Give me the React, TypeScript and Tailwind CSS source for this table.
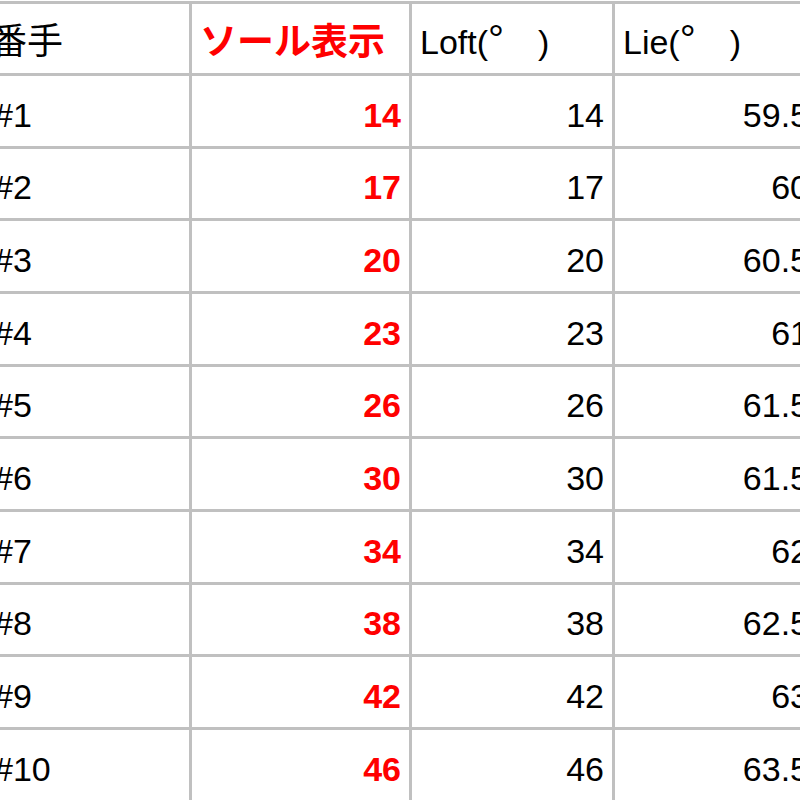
const rows = [
  { no: '#1', sole: '14', loft: '14', lie: '59.5' },
  { no: '#2', sole: '17', loft: '17', lie: '60' },
  { no: '#3', sole: '20', loft: '20', lie: '60.5' },
  { no: '#4', sole: '23', loft: '23', lie: '61' },
  { no: '#5', sole: '26', loft: '26', lie: '61.5' },
  { no: '#6', sole: '30', loft: '30', lie: '61.5' },
  { no: '#7', sole: '34', loft: '34', lie: '62' },
  { no: '#8', sole: '38', loft: '38', lie: '62.5' },
  { no: '#9', sole: '42', loft: '42', lie: '63' },
  { no: '#10', sole: '46', loft: '46', lie: '63.5' },
];

const font = { fontFamily: '"Liberation Sans", "Noto Sans CJK JP", sans-serif' };

function Cell({ children, right, className = 'px-2' }: { children: React.ReactNode; right?: boolean; className?: string }) {
  return (
    <div
      className={`bg-white flex items-center pt-[7px] whitespace-nowrap overflow-hidden ${
        right ? 'justify-end' : 'justify-start'
      } ${className}`}
    >
      {children}
    </div>
  );
}

export default function App() {
  return (
    <div className="w-[800px] h-[800px] overflow-hidden bg-white" style={font}>
      <div className="ml-[-21px] mt-[1px] w-[845px] grid grid-cols-[207px_217px_200px_202px] grid-rows-[69px_70px_69px_70px_70px_69px_70px_70px_69px_70px_70px] gap-[3px] p-[3px] bg-[#c0c0c0] text-[34px] leading-none text-black">
        {/* Header */}
        <Cell>
          <span className="text-[36px] ml-[1px]">番手</span>
        </Cell>
        <Cell>
          <span className="text-[37px] font-bold text-[#ff0000]">ソール表示</span>
        </Cell>
        <Cell>
          Loft(<span className="text-[40px] leading-none -mt-[6px]">°</span>　)
        </Cell>
        <Cell>
          Lie(<span className="text-[40px] leading-none -mt-[6px]">°</span>　)
        </Cell>

        {rows.map((r) => (
          <>
            <Cell key={r.no + 'a'} className="pl-[12px] pr-2">
              {r.no}
            </Cell>
            <Cell key={r.no + 'b'} right className="px-2 font-bold text-[#ff0000]">
              {r.sole}
            </Cell>
            <Cell key={r.no + 'c'} right>
              {r.loft}
            </Cell>
            <Cell key={r.no + 'd'} right>
              {r.lie}
            </Cell>
          </>
        ))}
      </div>
    </div>
  );
}
